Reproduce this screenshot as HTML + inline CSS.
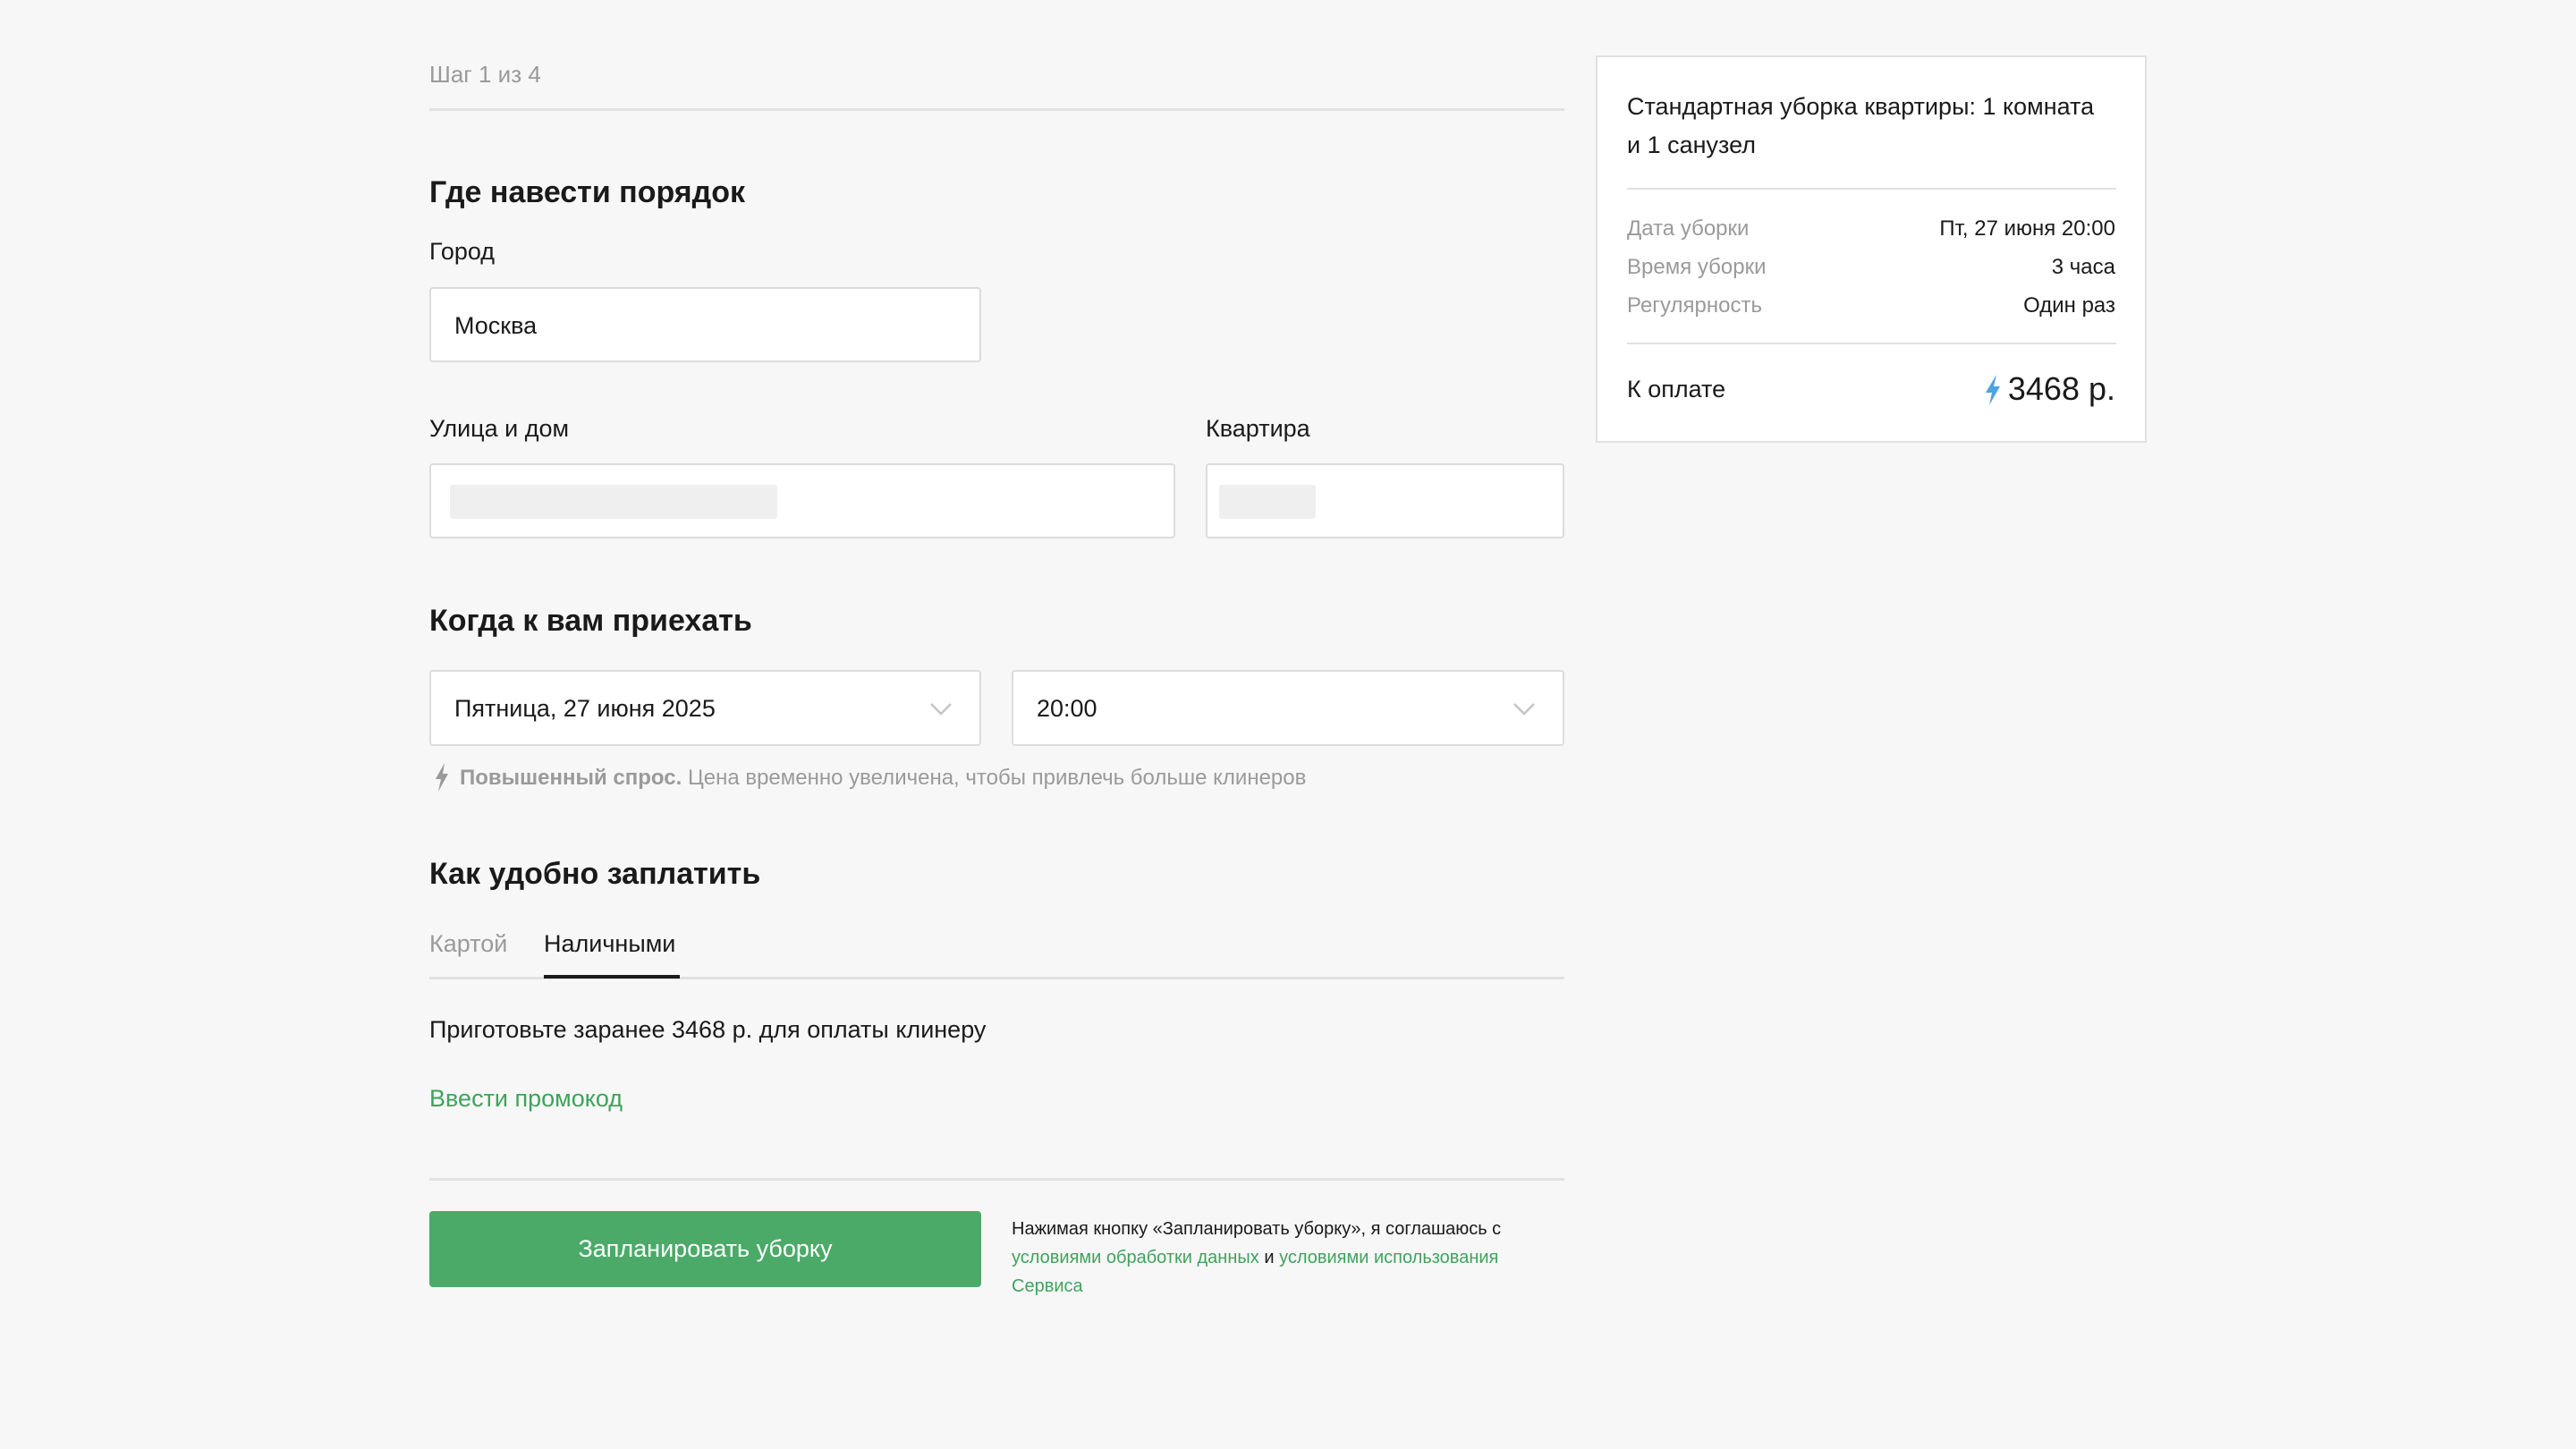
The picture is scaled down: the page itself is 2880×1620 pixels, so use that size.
<!DOCTYPE html>
<html><head><meta charset="utf-8"><style>
*{box-sizing:border-box;margin:0;padding:0}
body{width:2880px;height:1620px;background:#f7f7f7;font-family:"Liberation Sans","DejaVu Sans",sans-serif;color:#1a1a1a;position:relative;overflow:hidden}
.a{position:absolute;white-space:nowrap}
.line{position:absolute;height:3px;background:#e1e1e1}
.inp{position:absolute;background:#fff;border:2px solid #dcdcdc;border-radius:4px}
.lbl{font-size:27px}
.h{font-size:34px;font-weight:bold}
.chev{position:absolute;right:30px;top:34px}
.g{color:#3fa35c}
</style></head><body>
<div class="a" style="left:480px;top:68px;font-size:26px;color:#9a9a9a">Шаг 1 из 4</div>
<div class="line" style="left:480px;top:121px;width:1269px"></div>

<div class="a h" style="left:480px;top:196px">Где навести порядок</div>
<div class="a lbl" style="left:480px;top:266px">Город</div>
<div class="inp" style="left:480px;top:321px;width:617px;height:84px"><span class="a" style="left:26px;top:26px;font-size:27px">Москва</span></div>

<div class="a lbl" style="left:480px;top:464px">Улица и дом</div>
<div class="a lbl" style="left:1348px;top:464px">Квартира</div>
<div class="inp" style="left:480px;top:518px;width:834px;height:84px"><div class="a" style="left:21px;top:22px;width:366px;height:38px;background:#efefef;border-radius:3px"></div></div>
<div class="inp" style="left:1348px;top:518px;width:401px;height:84px"><div class="a" style="left:13px;top:22px;width:108px;height:38px;background:#efefef;border-radius:3px"></div></div>

<div class="a h" style="left:480px;top:675px">Когда к вам приехать</div>
<div class="inp" style="left:480px;top:749px;width:617px;height:85px"><span class="a" style="left:26px;top:26px;font-size:27px">Пятница, 27 июня 2025</span>
<svg class="chev" width="26" height="16" viewBox="0 0 26 16"><path d="M2 2l11 11L24 2" fill="none" stroke="#c4c4c4" stroke-width="2.5"/></svg></div>
<div class="inp" style="left:1131px;top:749px;width:618px;height:85px"><span class="a" style="left:26px;top:26px;font-size:27px">20:00</span>
<svg class="chev" width="26" height="16" viewBox="0 0 26 16"><path d="M2 2l11 11L24 2" fill="none" stroke="#c4c4c4" stroke-width="2.5"/></svg></div>

<svg class="a" style="left:485px;top:853px" width="18" height="32" viewBox="0 0 18 32"><path d="M12 0L2 18h6L5 32 16 12h-6z" fill="#9a9a9a"/></svg>
<div class="a" style="left:514px;top:856px;font-size:24px;color:#9a9a9a"><b>Повышенный спрос.</b> Цена временно увеличена, чтобы привлечь больше клинеров</div>

<div class="a h" style="left:480px;top:958px">Как удобно заплатить</div>
<div class="a lbl" style="left:480px;top:1040px;color:#9a9a9a">Картой</div>
<div class="a lbl" style="left:608px;top:1040px">Наличными</div>
<div class="line" style="left:480px;top:1092px;width:1269px"></div>
<div class="a" style="left:608px;top:1090px;width:152px;height:4px;background:#1a1a1a"></div>

<div class="a lbl" style="left:480px;top:1136px">Приготовьте заранее 3468 р. для оплаты клинеру</div>
<div class="a lbl g" style="left:480px;top:1213px">Ввести промокод</div>
<div class="line" style="left:480px;top:1317px;width:1269px"></div>

<div class="a" style="left:480px;top:1354px;width:617px;height:85px;background:#4caa69;border-radius:4px;color:#fff;font-size:27px;text-align:center;line-height:85px">Запланировать уборку</div>
<div class="a" style="left:1131px;top:1358px;font-size:20px;line-height:32px">Нажимая кнопку «Запланировать уборку», я соглашаюсь с<br><span class="g">условиями обработки данных</span> и <span class="g">условиями использования</span><br><span class="g">Сервиса</span></div>

<div class="a" style="left:1784px;top:62px;width:616px;height:433px;background:#fff;border:2px solid #e1e1e1">
<div class="a" style="left:33px;top:34px;font-size:27px;line-height:43px;white-space:normal;width:530px">Стандартная уборка квартиры: 1 комната и 1 санузел</div>
<div class="a" style="left:33px;top:146px;width:547px;height:2px;background:#e1e1e1"></div>
<div class="a" style="left:33px;top:170px;font-size:24px;color:#9a9a9a;line-height:43px">Дата уборки<br>Время уборки<br>Регулярность</div>
<div class="a" style="right:33px;top:170px;font-size:24px;line-height:43px;text-align:right">Пт, 27 июня 20:00<br>3 часа<br>Один раз</div>
<div class="a" style="left:33px;top:319px;width:547px;height:2px;background:#e1e1e1"></div>
<div class="a" style="left:33px;top:356px;font-size:27px">К оплате</div>
<svg class="a" style="left:432px;top:355px" width="20" height="34" viewBox="0 0 20 34"><path d="M14 0L2 20h7L6 34 18 13h-7z" fill="#4da3e0"/></svg>
<div class="a" style="right:33px;top:350px;font-size:36px">3468 р.</div>
</div>
</body></html>
